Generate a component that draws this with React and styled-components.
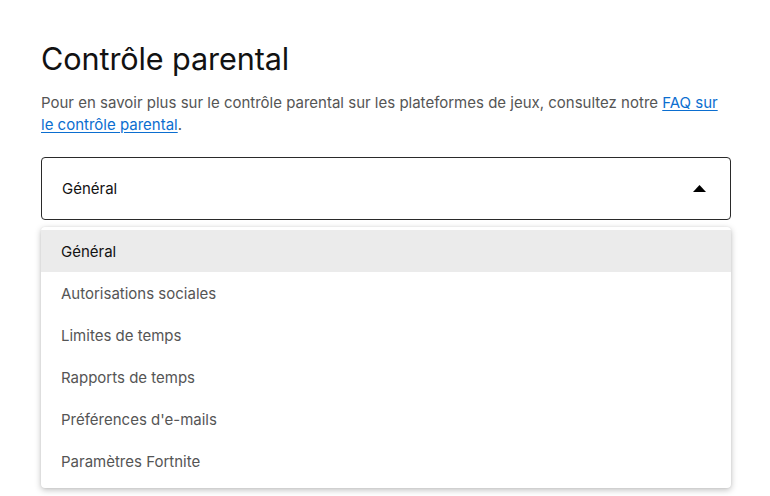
import React from "react";
import styled, { createGlobalStyle } from "styled-components";

const Global = createGlobalStyle`
  html, body { margin: 0; padding: 0; background: #fff; }
  body { font-family: Inter, "Noto Sans", sans-serif; -webkit-font-smoothing: antialiased; }
  * { box-sizing: border-box; }
`;

const Page = styled.div`
  width: 770px;
  height: 496px;
  overflow: hidden;
  padding: 38px 39px 0 41px;
`;

const Title = styled.h1`
  margin: 0;
  font-size: 30.6px;
  font-weight: 400;
  line-height: 42px;
  color: #121212;
  letter-spacing: -0.1px;
`;

const Intro = styled.p`
  margin: 12px 0 0;
  font-size: 15px;
  line-height: 22px;
  color: #555;
`;

const Link = styled.a`
  color: #0b6ed0;
  text-decoration: underline;
  text-underline-offset: 2px;
`;

const SelectBox = styled.div`
  margin-top: 21px;
  height: 63px;
  border: 1px solid #2a2a2a;
  border-radius: 4px;
  display: flex;
  align-items: center;
  justify-content: space-between;
  padding: 0 24px 0 20px;
  font-size: 15px;
  color: #121212;
`;

const Caret = styled.svg`
  width: 13px;
  height: 7px;
  display: block;
`;

const Menu = styled.ul`
  list-style: none;
  margin: 7px 0 0;
  padding: 3px 0 6px;
  background: #fff;
  border-radius: 4px;
  box-shadow: 0 2px 6px rgba(0, 0, 0, 0.25), 0 0 2px rgba(0, 0, 0, 0.08);
`;

const Item = styled.li`
  height: 42px;
  display: flex;
  align-items: center;
  padding: 0 20px;
  font-size: 15px;
  color: ${(p) => (p.$active ? "#121212" : "#555")};
  background: ${(p) => (p.$active ? "#ebebeb" : "transparent")};
`;

const items = [
  "Général",
  "Autorisations sociales",
  "Limites de temps",
  "Rapports de temps",
  "Préférences d'e-mails",
  "Paramètres Fortnite",
];

export default function App() {
  return (
    <>
      <Global />
      <Page>
        <Title>Contrôle parental</Title>
        <Intro>
          Pour en savoir plus sur le contrôle parental sur les plateformes de jeux, consultez notre{" "}
          <Link href="#">FAQ sur le contrôle parental</Link>.
        </Intro>
        <SelectBox>
          <span>Général</span>
          <Caret viewBox="0 0 13 7">
            <path d="M0 7 L6.5 0 L13 7 Z" fill="#000" />
          </Caret>
        </SelectBox>
        <Menu>
          {items.map((t, i) => (
            <Item key={t} $active={i === 0}>{t}</Item>
          ))}
        </Menu>
      </Page>
    </>
  );
}
